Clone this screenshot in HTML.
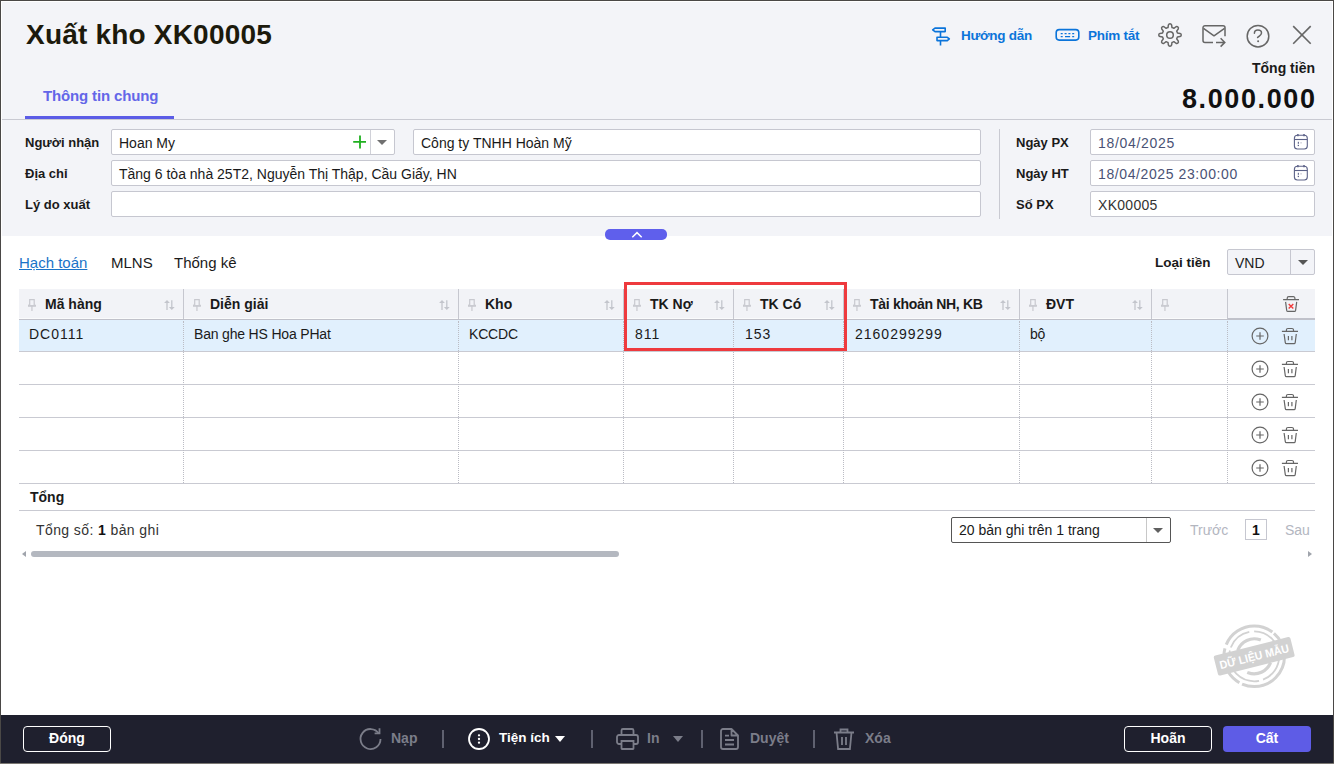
<!DOCTYPE html>
<html><head><meta charset="utf-8">
<style>
*{box-sizing:border-box;margin:0;padding:0}
html,body{width:1334px;height:764px;overflow:hidden;background:#fff}
body{font-family:"Liberation Sans",sans-serif;color:#1a1a1a;position:relative}
.abs{position:absolute}
svg{display:block}
.t{position:absolute;white-space:nowrap;line-height:1}
#win{position:absolute;left:0;top:0;width:1334px;height:764px;overflow:hidden;background:#fff}
#hdr{position:absolute;left:0;top:0;width:1334px;height:236px;background:#f3f4f8}
.inp{position:absolute;background:#fff;border:1px solid #c6c7d0;border-radius:2px;height:26px;font-size:14px;line-height:26px;padding-left:7px;color:#1a1a1a;white-space:nowrap}
.lbl{position:absolute;font-weight:bold;font-size:13px;white-space:nowrap;color:#1a1a1a;line-height:1}
.gh{font-size:14px;font-weight:bold;color:#1a1a1a}
.gv{font-size:13.5px;color:#1a1a1a}
#foot{position:absolute;left:0;top:715px;width:1334px;height:48px;background:#1f202e}
.fb{position:absolute;top:726px;height:26px;border:1.3px solid #fff;border-radius:4px;color:#fff;font-weight:bold;font-size:14px;line-height:23px;text-align:center}
.ft{position:absolute;top:731px;font-weight:bold;font-size:14px;line-height:1;white-space:nowrap}
.sep{position:absolute;top:730px;width:2px;height:18px;background:#5f6170}
</style></head><body>
<div id="win">
 <div id="hdr">
  <div class="t" style="left:26px;top:21px;font-size:28px;letter-spacing:0.2px;font-weight:bold;color:#1c1a0c">Xuất kho XK00005</div>
  <svg class="abs" style="left:930px;top:25px" width="22" height="22" viewBox="0 0 22 22"><path d="M5 3.1H15.2V6.6H5L2.7 4.85Z M10.5 6.6V12.3 M7 12.3H17.3L19.3 13.95 17.3 15.6H7Z M10.5 15.6V20.5" stroke="#0b74da" stroke-width="1.6" fill="none" stroke-linejoin="round"/></svg>
<svg class="abs" style="left:1055px;top:28px" width="26" height="14" viewBox="0 0 26 14"><rect x="1.2" y="1.6" width="22.6" height="10.5" rx="3" stroke="#0b74da" stroke-width="1.6" fill="none"/><path d="M5.7 5.6h2M9.6 5.6h2M13.4 5.6h2M17.2 5.6h2M5.7 8.6h2M10 8.6h5.1M17.2 8.6h2" stroke="#0b74da" stroke-width="1.2"/></svg>
<svg class="abs" style="left:1158px;top:23px" width="24" height="24" viewBox="0 0 24 24"><path d="M10.01 4.56 L10.40 1.93 A1.68 1.68 0 0 1 13.60 1.93 L13.99 4.56 A7.7 7.7 0 0 1 15.85 5.33 L18.00 3.75 A1.68 1.68 0 0 1 20.25 6.00 L18.67 8.15 A7.7 7.7 0 0 1 19.44 10.01 L22.07 10.40 A1.68 1.68 0 0 1 22.07 13.60 L19.44 13.99 A7.7 7.7 0 0 1 18.67 15.85 L20.25 18.00 A1.68 1.68 0 0 1 18.00 20.25 L15.85 18.67 A7.7 7.7 0 0 1 13.99 19.44 L13.60 22.07 A1.68 1.68 0 0 1 10.40 22.07 L10.01 19.44 A7.7 7.7 0 0 1 8.15 18.67 L6.00 20.25 A1.68 1.68 0 0 1 3.75 18.00 L5.33 15.85 A7.7 7.7 0 0 1 4.56 13.99 L1.93 13.60 A1.68 1.68 0 0 1 1.93 10.40 L4.56 10.01 A7.7 7.7 0 0 1 5.33 8.15 L3.75 6.00 A1.68 1.68 0 0 1 6.00 3.75 L8.15 5.33 A7.7 7.7 0 0 1 10.01 4.56Z" stroke="#666" stroke-width="1.5" fill="none" stroke-linejoin="round"/><circle cx="12" cy="12" r="3.3" stroke="#666" stroke-width="1.5" fill="none"/></svg>
<svg class="abs" style="left:1200px;top:22px" width="28" height="26" viewBox="0 0 28 26"><path d="M13 20.4H5a2 2 0 0 1-2-2V5.7a2 2 0 0 1 2-2H23a2 2 0 0 1 2 2V14.3" stroke="#666" stroke-width="1.5" fill="none" stroke-linejoin="round"/><path d="M3.5 6.3L14 13.8 24.5 6.3" stroke="#666" stroke-width="1.5" fill="none" stroke-linejoin="round"/><path d="M16 20.4H24.6M20.6 16.2L24.8 20.4 20.6 24.6" stroke="#666" stroke-width="1.5" fill="none"/></svg>
<svg class="abs" style="left:1245px;top:23px" width="26" height="26" viewBox="0 0 26 26"><circle cx="13" cy="13.2" r="10.8" stroke="#666" stroke-width="1.5" fill="none"/><path d="M9.4 10.2C9.4 8.1 11 7 12.9 7C14.9 7 16.5 8.3 16.5 10C16.5 12.1 14.2 12.8 12.6 14.5" stroke="#666" stroke-width="1.5" fill="none" stroke-linecap="round"/><circle cx="13.1" cy="18.3" r="1" fill="#666"/></svg>
<svg class="abs" style="left:1290px;top:23px" width="24" height="24" viewBox="0 0 24 24"><path d="M3.2 3.1L20.7 20.8M20.7 3.1L3.2 20.8" stroke="#666" stroke-width="1.6"/></svg>
  <div class="t" style="left:961px;top:28.5px;font-size:13.5px;letter-spacing:-0.25px;font-weight:bold;color:#0b74da">Hướng dẫn</div>
  <div class="t" style="left:1088px;top:28.5px;font-size:13.5px;letter-spacing:-0.25px;font-weight:bold;color:#0b74da">Phím tắt</div>
  <div class="t" style="right:19px;top:61px;font-size:14px;font-weight:bold;color:#1a1a1a">Tổng tiền</div>
  <div class="t" style="left:1182px;top:86px;font-size:27px;letter-spacing:1.6px;font-weight:bold;color:#111">8.000.000</div>
  <div class="t" style="left:43px;top:88px;font-size:15px;letter-spacing:-0.15px;font-weight:bold;color:#6366e8">Thông tin chung</div>
  <div class="abs" style="left:25px;top:116px;width:149px;height:3px;background:#5b5ce6"></div>
  <div class="abs" style="left:0;top:119px;width:1334px;height:1px;background:#c9cad2"></div>

  <div class="lbl" style="left:25px;top:136px">Người nhận</div>
  <div class="lbl" style="left:25px;top:167px">Địa chỉ</div>
  <div class="lbl" style="left:25px;top:198px">Lý do xuất</div>
  <div class="inp" style="left:111px;top:129px;width:284px">Hoan My</div>
  <div class="abs" style="left:370px;top:130px;width:1px;height:24px;background:#d0d1d8"></div>
  <svg class="abs" style="left:353px;top:135px" width="13" height="14" viewBox="0 0 13 14"><path d="M7 0.5v13M0.2 6.8h13" stroke="#1fb01f" stroke-width="1.8"/></svg>
  <svg class="abs" style="left:377px;top:140px" width="10" height="5" viewBox="0 0 10 5"><path d="M0 0h10L5 5z" fill="#707070"/></svg>
  <div class="inp" style="left:413px;top:129px;width:568px">Công ty TNHH Hoàn Mỹ</div>
  <div class="inp" style="left:111px;top:160px;width:870px">Tầng 6 tòa nhà 25T2, Nguyễn Thị Thập, Cầu Giấy, HN</div>
  <div class="inp" style="left:111px;top:191px;width:870px"></div>
  <div class="abs" style="left:999px;top:129px;width:1px;height:90px;background:#c9cad2"></div>
  <div class="lbl" style="left:1016px;top:136px">Ngày PX</div>
  <div class="lbl" style="left:1016px;top:167px">Ngày HT</div>
  <div class="lbl" style="left:1016px;top:198px">Số PX</div>
  <div class="inp" style="left:1090px;top:129px;width:225px;color:#4a5275;letter-spacing:0.7px">18/04/2025</div>
  <div class="inp" style="left:1090px;top:160px;width:225px;color:#4a5275;letter-spacing:0.6px">18/04/2025 23:00:00</div>
  <div class="inp" style="left:1090px;top:191px;width:225px;color:#333;letter-spacing:0.3px">XK00005</div>
  <svg class="abs" style="left:1293px;top:133px" width="16" height="17" viewBox="0 0 16 17"><rect x="1.4" y="2.3" width="12.9" height="13.7" rx="3" stroke="#5c6288" stroke-width="1.1" fill="none"/><path d="M1.4 6.5H14.3" stroke="#5c6288" stroke-width="1.1"/><path d="M4.9 0.9V3.3M11 0.9V3.3" stroke="#5c6288" stroke-width="1.5"/><rect x="4.8" y="8.8" width="1.1" height="2" fill="#5c6288"/><rect x="7.5" y="9.3" width="1.1" height="1.1" fill="#aab"/><rect x="4.7" y="11.8" width="1.3" height="1.3" fill="#5c6288"/></svg><svg class="abs" style="left:1293px;top:164px" width="16" height="17" viewBox="0 0 16 17"><rect x="1.4" y="2.3" width="12.9" height="13.7" rx="3" stroke="#5c6288" stroke-width="1.1" fill="none"/><path d="M1.4 6.5H14.3" stroke="#5c6288" stroke-width="1.1"/><path d="M4.9 0.9V3.3M11 0.9V3.3" stroke="#5c6288" stroke-width="1.5"/><rect x="4.8" y="8.8" width="1.1" height="2" fill="#5c6288"/><rect x="7.5" y="9.3" width="1.1" height="1.1" fill="#aab"/><rect x="4.7" y="11.8" width="1.3" height="1.3" fill="#5c6288"/></svg>
 </div>
 <div class="abs" style="left:605px;top:229px;width:62px;height:11px;background:#5f5fec;border-radius:5px"></div>
 <svg class="abs" style="left:631px;top:231px" width="12" height="7" viewBox="0 0 12 7"><path d="M1.3 6.2L6 1.6 10.7 6.2" stroke="#fff" stroke-width="1.5" fill="none"/></svg>

 <div class="t" style="left:19px;top:255px;font-size:15px;color:#1a73c8;text-decoration:underline">Hạch toán</div>
 <div class="t" style="left:111px;top:255px;font-size:15px">MLNS</div>
 <div class="t" style="left:174px;top:255px;font-size:15px">Thống kê</div>
 <div class="lbl" style="left:1155px;top:255.5px;font-size:13.5px">Loại tiền</div>
 <div class="inp" style="left:1227px;top:249px;width:88px;height:26px;background:#f3f4f8;color:#222">VND</div>
 <div class="abs" style="left:1290px;top:250px;width:1px;height:24px;background:#c6c7d0"></div>
 <svg class="abs" style="left:1298px;top:260px" width="10" height="5" viewBox="0 0 10 5"><path d="M0 0h10L5 5z" fill="#555"/></svg>

 <div class="abs" style="left:19px;top:289px;width:1296px;height:30px;background:#f2f3f7"></div>
<div class="abs" style="left:19px;top:320px;width:1296px;height:31px;background:#e1f0fd"></div>
<div class="abs" style="left:19px;top:318px;width:1209px;height:1px;background:#fafbfc"></div>
<div class="abs" style="left:1228px;top:318px;width:87px;height:1px;background:#c0c1ca"></div>
<div class="abs" style="left:19px;top:319px;width:1296px;height:1px;background:#c0c1ca"></div>
<div class="abs" style="left:19px;top:351px;width:1296px;height:1px;background:#c9cad2"></div>
<div class="abs" style="left:19px;top:384px;width:1296px;height:1px;background:#c9cad2"></div>
<div class="abs" style="left:19px;top:417px;width:1296px;height:1px;background:#c9cad2"></div>
<div class="abs" style="left:19px;top:450px;width:1296px;height:1px;background:#c9cad2"></div>
<div class="abs" style="left:19px;top:483px;width:1296px;height:1px;background:#c9cad2"></div>
<div class="abs" style="left:19px;top:510px;width:1296px;height:1px;background:#c9cad2"></div>
<div class="abs" style="left:27px;top:298px"><svg width="10" height="14" viewBox="0 0 10 14"><path d="M2.7 7V1.7H7.2V7M1 8.1H8.9M4.95 8.1V12.9" stroke="#c8c9cf" stroke-width="1.2" fill="none"/><path d="M2.1 6.6L1 7.6H8.9L7.8 6.6" stroke="#c8c9cf" stroke-width="1" fill="none"/></svg></div>
<div class="t gh" style="left:45px;top:297px">Mã hàng</div>
<div class="abs" style="left:163px;top:299px"><svg width="13" height="12" viewBox="0 0 13 12"><path d="M4 2.5V10.9M8.8 1.2V9.5" stroke="#c3c5cc" stroke-width="1.3"/><path d="M1.1 3.9L4 1.1 6.9 3.9zM5.9 8.1L8.8 10.9 11.7 8.1z" fill="#c3c5cc"/></svg></div>
<div class="t gv" style="left:29px;top:327px;font-size:14px;letter-spacing:1px">DC0111</div>
<div class="abs" style="left:183px;top:289px;width:1px;height:30px;background:#c6c7cf"></div>
<div class="abs" style="left:183px;top:321px;width:0;height:162px;border-left:1px dotted #bbbcc4"></div>
<div class="abs" style="left:192px;top:298px"><svg width="10" height="14" viewBox="0 0 10 14"><path d="M2.7 7V1.7H7.2V7M1 8.1H8.9M4.95 8.1V12.9" stroke="#c8c9cf" stroke-width="1.2" fill="none"/><path d="M2.1 6.6L1 7.6H8.9L7.8 6.6" stroke="#c8c9cf" stroke-width="1" fill="none"/></svg></div>
<div class="t gh" style="left:210px;top:297px">Diễn giải</div>
<div class="abs" style="left:438px;top:299px"><svg width="13" height="12" viewBox="0 0 13 12"><path d="M4 2.5V10.9M8.8 1.2V9.5" stroke="#c3c5cc" stroke-width="1.3"/><path d="M1.1 3.9L4 1.1 6.9 3.9zM5.9 8.1L8.8 10.9 11.7 8.1z" fill="#c3c5cc"/></svg></div>
<div class="t gv" style="left:194px;top:327px;font-size:14px;letter-spacing:-0.18px">Ban ghe HS Hoa PHat</div>
<div class="abs" style="left:458px;top:289px;width:1px;height:30px;background:#c6c7cf"></div>
<div class="abs" style="left:458px;top:321px;width:0;height:162px;border-left:1px dotted #bbbcc4"></div>
<div class="abs" style="left:467px;top:298px"><svg width="10" height="14" viewBox="0 0 10 14"><path d="M2.7 7V1.7H7.2V7M1 8.1H8.9M4.95 8.1V12.9" stroke="#c8c9cf" stroke-width="1.2" fill="none"/><path d="M2.1 6.6L1 7.6H8.9L7.8 6.6" stroke="#c8c9cf" stroke-width="1" fill="none"/></svg></div>
<div class="t gh" style="left:485px;top:297px">Kho</div>
<div class="abs" style="left:603px;top:299px"><svg width="13" height="12" viewBox="0 0 13 12"><path d="M4 2.5V10.9M8.8 1.2V9.5" stroke="#c3c5cc" stroke-width="1.3"/><path d="M1.1 3.9L4 1.1 6.9 3.9zM5.9 8.1L8.8 10.9 11.7 8.1z" fill="#c3c5cc"/></svg></div>
<div class="t gv" style="left:469px;top:327px;font-size:14px;letter-spacing:-0.18px">KCCDC</div>
<div class="abs" style="left:623px;top:289px;width:1px;height:30px;background:#c6c7cf"></div>
<div class="abs" style="left:623px;top:321px;width:0;height:162px;border-left:1px dotted #bbbcc4"></div>
<div class="abs" style="left:632px;top:298px"><svg width="10" height="14" viewBox="0 0 10 14"><path d="M2.7 7V1.7H7.2V7M1 8.1H8.9M4.95 8.1V12.9" stroke="#c8c9cf" stroke-width="1.2" fill="none"/><path d="M2.1 6.6L1 7.6H8.9L7.8 6.6" stroke="#c8c9cf" stroke-width="1" fill="none"/></svg></div>
<div class="t gh" style="left:650px;top:297px">TK Nợ</div>
<div class="abs" style="left:713px;top:299px"><svg width="13" height="12" viewBox="0 0 13 12"><path d="M4 2.5V10.9M8.8 1.2V9.5" stroke="#c3c5cc" stroke-width="1.3"/><path d="M1.1 3.9L4 1.1 6.9 3.9zM5.9 8.1L8.8 10.9 11.7 8.1z" fill="#c3c5cc"/></svg></div>
<div class="t gv" style="left:635px;top:327px;font-size:14px;letter-spacing:1px">811</div>
<div class="abs" style="left:733px;top:289px;width:1px;height:30px;background:#c6c7cf"></div>
<div class="abs" style="left:733px;top:321px;width:0;height:162px;border-left:1px dotted #bbbcc4"></div>
<div class="abs" style="left:742px;top:298px"><svg width="10" height="14" viewBox="0 0 10 14"><path d="M2.7 7V1.7H7.2V7M1 8.1H8.9M4.95 8.1V12.9" stroke="#c8c9cf" stroke-width="1.2" fill="none"/><path d="M2.1 6.6L1 7.6H8.9L7.8 6.6" stroke="#c8c9cf" stroke-width="1" fill="none"/></svg></div>
<div class="t gh" style="left:760px;top:297px">TK Có</div>
<div class="abs" style="left:823px;top:299px"><svg width="13" height="12" viewBox="0 0 13 12"><path d="M4 2.5V10.9M8.8 1.2V9.5" stroke="#c3c5cc" stroke-width="1.3"/><path d="M1.1 3.9L4 1.1 6.9 3.9zM5.9 8.1L8.8 10.9 11.7 8.1z" fill="#c3c5cc"/></svg></div>
<div class="t gv" style="left:745px;top:327px;font-size:14px;letter-spacing:1px">153</div>
<div class="abs" style="left:843px;top:289px;width:1px;height:30px;background:#c6c7cf"></div>
<div class="abs" style="left:843px;top:321px;width:0;height:162px;border-left:1px dotted #bbbcc4"></div>
<div class="abs" style="left:852px;top:298px"><svg width="10" height="14" viewBox="0 0 10 14"><path d="M2.7 7V1.7H7.2V7M1 8.1H8.9M4.95 8.1V12.9" stroke="#c8c9cf" stroke-width="1.2" fill="none"/><path d="M2.1 6.6L1 7.6H8.9L7.8 6.6" stroke="#c8c9cf" stroke-width="1" fill="none"/></svg></div>
<div class="t gh" style="left:870px;top:297px;letter-spacing:-0.3px">Tài khoản NH, KB</div>
<div class="abs" style="left:999px;top:299px"><svg width="13" height="12" viewBox="0 0 13 12"><path d="M4 2.5V10.9M8.8 1.2V9.5" stroke="#c3c5cc" stroke-width="1.3"/><path d="M1.1 3.9L4 1.1 6.9 3.9zM5.9 8.1L8.8 10.9 11.7 8.1z" fill="#c3c5cc"/></svg></div>
<div class="t gv" style="left:855px;top:327px;font-size:14px;letter-spacing:1px">2160299299</div>
<div class="abs" style="left:1019px;top:289px;width:1px;height:30px;background:#c6c7cf"></div>
<div class="abs" style="left:1019px;top:321px;width:0;height:162px;border-left:1px dotted #bbbcc4"></div>
<div class="abs" style="left:1028px;top:298px"><svg width="10" height="14" viewBox="0 0 10 14"><path d="M2.7 7V1.7H7.2V7M1 8.1H8.9M4.95 8.1V12.9" stroke="#c8c9cf" stroke-width="1.2" fill="none"/><path d="M2.1 6.6L1 7.6H8.9L7.8 6.6" stroke="#c8c9cf" stroke-width="1" fill="none"/></svg></div>
<div class="t gh" style="left:1046px;top:297px">ĐVT</div>
<div class="abs" style="left:1131px;top:299px"><svg width="13" height="12" viewBox="0 0 13 12"><path d="M4 2.5V10.9M8.8 1.2V9.5" stroke="#c3c5cc" stroke-width="1.3"/><path d="M1.1 3.9L4 1.1 6.9 3.9zM5.9 8.1L8.8 10.9 11.7 8.1z" fill="#c3c5cc"/></svg></div>
<div class="t gv" style="left:1030px;top:327px;font-size:14px;letter-spacing:-0.18px">bộ</div>
<div class="abs" style="left:1151px;top:289px;width:1px;height:30px;background:#c6c7cf"></div>
<div class="abs" style="left:1151px;top:321px;width:0;height:162px;border-left:1px dotted #bbbcc4"></div>
<div class="abs" style="left:1160px;top:298px"><svg width="10" height="14" viewBox="0 0 10 14"><path d="M2.7 7V1.7H7.2V7M1 8.1H8.9M4.95 8.1V12.9" stroke="#c8c9cf" stroke-width="1.2" fill="none"/><path d="M2.1 6.6L1 7.6H8.9L7.8 6.6" stroke="#c8c9cf" stroke-width="1" fill="none"/></svg></div>
<div class="abs" style="left:1227px;top:289px;width:1px;height:30px;background:#c6c7cf"></div>
<div class="abs" style="left:1227px;top:321px;width:0;height:162px;border-left:1px dotted #bbbcc4"></div>
<div class="abs" style="left:1282px;top:292px"><svg width="18" height="21" viewBox="0 0 18 21"><path d="M1.1 7.6H17M5.2 7.6V6.2a1.5 1.5 0 0 1 1.5-1.5H11.4a1.5 1.5 0 0 1 1.5 1.5V7.6M3.6 9.8L4.7 18.4a1.2 1.2 0 0 0 1.2 1H12.4a1.2 1.2 0 0 0 1.2-1L14.7 9.8" stroke="#666" stroke-width="1.2" fill="none"/><path d="M6.7 12l4.6 4.6M11.3 12l-4.6 4.6" stroke="#f03c3c" stroke-width="1.4"/></svg></div>
<div class="abs" style="left:1250px;top:326px"><svg width="20" height="20" viewBox="0 0 20 20"><circle cx="10" cy="10" r="7.9" stroke="#666" stroke-width="1.2" fill="none"/><path d="M10 6.3v7.5M6.2 10h7.6" stroke="#666" stroke-width="1.2"/></svg></div>
<div class="abs" style="left:1281px;top:327px"><svg width="18" height="18" viewBox="0 0 18 18"><path d="M0.9 4.4H17M5.4 4.4V3a1.5 1.5 0 0 1 1.5-1.5H11a1.5 1.5 0 0 1 1.5 1.5V4.4M3.1 7L4.3 15.6a1.2 1.2 0 0 0 1.2 1H13a1.2 1.2 0 0 0 1.2-1L15.3 7M7.4 9V13.3M10.9 9V13.3" stroke="#666" stroke-width="1.2" fill="none"/></svg></div>
<div class="abs" style="left:1250px;top:359px"><svg width="20" height="20" viewBox="0 0 20 20"><circle cx="10" cy="10" r="7.9" stroke="#666" stroke-width="1.2" fill="none"/><path d="M10 6.3v7.5M6.2 10h7.6" stroke="#666" stroke-width="1.2"/></svg></div>
<div class="abs" style="left:1281px;top:360px"><svg width="18" height="18" viewBox="0 0 18 18"><path d="M0.9 4.4H17M5.4 4.4V3a1.5 1.5 0 0 1 1.5-1.5H11a1.5 1.5 0 0 1 1.5 1.5V4.4M3.1 7L4.3 15.6a1.2 1.2 0 0 0 1.2 1H13a1.2 1.2 0 0 0 1.2-1L15.3 7M7.4 9V13.3M10.9 9V13.3" stroke="#666" stroke-width="1.2" fill="none"/></svg></div>
<div class="abs" style="left:1250px;top:392px"><svg width="20" height="20" viewBox="0 0 20 20"><circle cx="10" cy="10" r="7.9" stroke="#666" stroke-width="1.2" fill="none"/><path d="M10 6.3v7.5M6.2 10h7.6" stroke="#666" stroke-width="1.2"/></svg></div>
<div class="abs" style="left:1281px;top:393px"><svg width="18" height="18" viewBox="0 0 18 18"><path d="M0.9 4.4H17M5.4 4.4V3a1.5 1.5 0 0 1 1.5-1.5H11a1.5 1.5 0 0 1 1.5 1.5V4.4M3.1 7L4.3 15.6a1.2 1.2 0 0 0 1.2 1H13a1.2 1.2 0 0 0 1.2-1L15.3 7M7.4 9V13.3M10.9 9V13.3" stroke="#666" stroke-width="1.2" fill="none"/></svg></div>
<div class="abs" style="left:1250px;top:425px"><svg width="20" height="20" viewBox="0 0 20 20"><circle cx="10" cy="10" r="7.9" stroke="#666" stroke-width="1.2" fill="none"/><path d="M10 6.3v7.5M6.2 10h7.6" stroke="#666" stroke-width="1.2"/></svg></div>
<div class="abs" style="left:1281px;top:426px"><svg width="18" height="18" viewBox="0 0 18 18"><path d="M0.9 4.4H17M5.4 4.4V3a1.5 1.5 0 0 1 1.5-1.5H11a1.5 1.5 0 0 1 1.5 1.5V4.4M3.1 7L4.3 15.6a1.2 1.2 0 0 0 1.2 1H13a1.2 1.2 0 0 0 1.2-1L15.3 7M7.4 9V13.3M10.9 9V13.3" stroke="#666" stroke-width="1.2" fill="none"/></svg></div>
<div class="abs" style="left:1250px;top:458px"><svg width="20" height="20" viewBox="0 0 20 20"><circle cx="10" cy="10" r="7.9" stroke="#666" stroke-width="1.2" fill="none"/><path d="M10 6.3v7.5M6.2 10h7.6" stroke="#666" stroke-width="1.2"/></svg></div>
<div class="abs" style="left:1281px;top:459px"><svg width="18" height="18" viewBox="0 0 18 18"><path d="M0.9 4.4H17M5.4 4.4V3a1.5 1.5 0 0 1 1.5-1.5H11a1.5 1.5 0 0 1 1.5 1.5V4.4M3.1 7L4.3 15.6a1.2 1.2 0 0 0 1.2 1H13a1.2 1.2 0 0 0 1.2-1L15.3 7M7.4 9V13.3M10.9 9V13.3" stroke="#666" stroke-width="1.2" fill="none"/></svg></div>
<div class="abs" style="left:624px;top:282px;width:223px;height:69px;border:3px solid #ee3a3e"></div>
 <div class="t" style="left:30px;top:490px;font-size:14px;font-weight:bold">Tổng</div>
 <div class="t" style="left:36px;top:523px;font-size:14px;letter-spacing:0.4px;color:#333">Tổng số: <b style="color:#111">1</b> bản ghi</div>
 <div class="abs" style="left:951px;top:517px;width:220px;height:26px;border:1px solid #555;border-radius:2px;background:#fff"></div>
<div class="abs" style="left:1146px;top:518px;width:1px;height:24px;background:#c8c8c8"></div>
<svg class="abs" style="left:1153px;top:528px" width="10" height="5" viewBox="0 0 10 5"><path d="M0 0h10L5 5z" fill="#606060"/></svg>
<div class="t" style="left:959px;top:523px;font-size:14px;color:#1a1a1a">20 bản ghi trên 1 trang</div>
<div class="t" style="left:1190px;top:523px;font-size:14px;color:#b3b6bf">Trước</div>
<div class="abs" style="left:1245px;top:519px;width:22px;height:21px;border:1px solid #c6c7d0"></div>
<div class="t" style="left:1252px;top:523px;font-size:14px;font-weight:bold;color:#111">1</div>
<div class="t" style="left:1285px;top:523px;font-size:14px;color:#b3b6bf">Sau</div>
<div class="abs" style="left:31px;top:551px;width:588px;height:6px;border-radius:3px;background:#b4b8c0"></div>
<svg class="abs" style="left:22px;top:551px" width="4" height="6" viewBox="0 0 4 6"><path d="M4 0v6L0 3z" fill="#a0a4ac"/></svg>
<svg class="abs" style="left:1308px;top:551px" width="4" height="6" viewBox="0 0 4 6"><path d="M0 0v6l4-3z" fill="#a0a4ac"/></svg>
 <div id="foot"></div>
 <div class="fb" style="left:23px;width:88px">Đóng</div>
<svg class="abs" style="left:357px;top:726px" width="26" height="26" viewBox="0 0 26 26"><path d="M23.5 13A10 10 0 1 1 21.9 7.6" stroke="#7b7d89" stroke-width="1.8" fill="none"/><path d="M22.5 2.3V7.4H17.6" stroke="#7b7d89" stroke-width="1.8" fill="none" stroke-linejoin="miter"/></svg>
<div class="ft" style="left:391px;color:#7b7d89">Nạp</div>
<div class="sep" style="left:442px"></div>
<svg class="abs" style="left:468px;top:728px" width="22" height="22" viewBox="0 0 22 22"><circle cx="11" cy="11" r="10" stroke="#fff" stroke-width="1.8" fill="none"/><circle cx="11" cy="7.3" r="1.15" fill="#fff"/><circle cx="11" cy="11" r="1.15" fill="#fff"/><circle cx="11" cy="14.7" r="1.15" fill="#fff"/></svg>
<div class="ft" style="left:499px;font-size:13.5px;color:#fff">Tiện ích</div>
<svg class="abs" style="left:555px;top:736px" width="10" height="6" viewBox="0 0 10 6"><path d="M0 0h10L5 6z" fill="#fff"/></svg>
<div class="sep" style="left:591px"></div>
<svg class="abs" style="left:616px;top:728px" width="23" height="22" viewBox="0 0 23 22"><path d="M5.5 7V2.5a1.5 1.5 0 0 1 1.5-1.5h9a1.5 1.5 0 0 1 1.5 1.5V7M5.5 16H3a2 2 0 0 1-2-2V9a2 2 0 0 1 2-2h17a2 2 0 0 1 2 2v5a2 2 0 0 1-2 2h-2.5M5.5 13h12v7.5a.5.5 0 0 1-.5.5H6a.5.5 0 0 1-.5-.5z" stroke="#7b7d89" stroke-width="1.8" fill="none"/></svg>
<div class="ft" style="left:647px;color:#7b7d89">In</div>
<svg class="abs" style="left:673px;top:736px" width="10" height="6" viewBox="0 0 10 6"><path d="M0 0h10L5 6z" fill="#7b7d89"/></svg>
<div class="sep" style="left:701px"></div>
<svg class="abs" style="left:720px;top:728px" width="19" height="22" viewBox="0 0 19 22"><path d="M11.5 1H3a2 2 0 0 0-2 2v16a2 2 0 0 0 2 2h13a2 2 0 0 0 2-2V7.5zM11.5 1v6.5H18M5 7.6h4M5 12h9M5 16.5h9" stroke="#7b7d89" stroke-width="1.8" fill="none" stroke-linejoin="round"/></svg>
<div class="ft" style="left:750px;color:#7b7d89">Duyệt</div>
<div class="sep" style="left:813px"></div>
<svg class="abs" style="left:833px;top:728px" width="22" height="22" viewBox="0 0 22 22"><path d="M1 4.5h20M7.5 4.5V1.5h7v3M3.5 4.5l1.6 16.5h11.8l1.6-16.5M9 9v8M13 9v8" stroke="#7b7d89" stroke-width="1.8" fill="none"/></svg>
<div class="ft" style="left:865px;color:#7b7d89">Xóa</div>
<div class="fb" style="left:1124px;width:88px">Hoãn</div>
<div class="fb" style="left:1223px;width:88px;border:none;background:#5e5ce6;line-height:24.5px">Cất</div>
 <svg class="abs" style="left:1209px;top:616px" width="92" height="82" viewBox="0 0 92 82">
<g fill="none" stroke="#d2d2d2">
<circle cx="45.2" cy="40.3" r="30.3" stroke-width="3" stroke-dasharray="60 3 40 4 55 2 30 3"/>
<circle cx="45.2" cy="40.3" r="25" stroke-width="1.8" stroke-dasharray="30 4 50 3 25 5 40 3"/>
<circle cx="45.2" cy="40.3" r="17.5" stroke-width="3.2" stroke-dasharray="28 27 28 27" transform="rotate(-160 45.2 40.3)"/>
</g>
<g transform="rotate(-14.2 45.2 40.3)"><rect x="5.7" y="30" width="79" height="20.6" rx="2" fill="#d2d2d2"/>
<text x="45.2" y="44.6" text-anchor="middle" font-family="Liberation Sans" font-weight="bold" font-size="11.5" textLength="71" lengthAdjust="spacingAndGlyphs" fill="#fff">DỮ LIỆU MẪU</text></g>
</svg>
 <div class="abs" style="left:1px;top:1px;width:1332px;height:1px;background:#fff"></div>
 <div class="abs" style="left:1px;top:1px;width:1px;height:235px;background:#fff"></div>
 <div class="abs" style="left:1332px;top:1px;width:1px;height:235px;background:#fff"></div>
 <div class="abs" style="left:0;top:0;width:1334px;height:1px;background:#4a4846"></div>
 <div class="abs" style="left:0;top:0;width:1px;height:764px;background:#4a4846"></div>
 <div class="abs" style="left:1333px;top:0;width:1px;height:764px;background:#4a4846"></div>
 <div class="abs" style="left:0;top:763px;width:1334px;height:1px;background:#7a7772"></div>
</div>
</body></html>
